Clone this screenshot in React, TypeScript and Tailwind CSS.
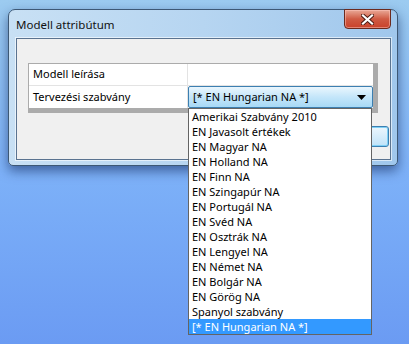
import React from "react";

const items = [
  "Amerikai Szabvány 2010",
  "EN Javasolt értékek",
  "EN Magyar NA",
  "EN Holland NA",
  "EN Finn NA",
  "EN Szingapúr NA",
  "EN Portugál NA",
  "EN Svéd NA",
  "EN Osztrák NA",
  "EN Lengyel NA",
  "EN Német NA",
  "EN Bolgár NA",
  "EN Görög NA",
  "Spanyol szabvány",
  "[* EN Hungarian NA *]",
];

export default function App() {
  return (
    <div
      className="w-[409px] h-[344px] overflow-hidden bg-gradient-to-b from-[#9ccbf0] via-[#7db1f8] to-[#6b9bf3] text-[11px] text-black"
      style={{ fontFamily: '"Noto Sans", "Open Sans", sans-serif' }}
    >
      <div className="pt-[9px] pl-[8px]">
        {/* window */}
        <div className="relative w-[390px] h-[157px] rounded-t-[7px] rounded-b-[5px] border border-[#3d5875] bg-gradient-to-r from-[#c8e0f4] via-[#b6d5f1] to-[#a0c7ec] shadow-[0_5px_12px_rgba(10,30,80,0.55)] flex flex-col">
          {/* title bar */}
          <div className="h-[28px] flex items-start">
            <div className="pl-[7px] pt-[7px] leading-[16px] text-[11.5px] text-[#111]">Modell attribútum</div>
            <div className="ml-auto mr-[6px] w-[47px] h-[20px] -mt-[1px] rounded-b-[4px] border border-[#6b2a1e] bg-gradient-to-b from-[#e8a897] via-[#cf5a43] to-[#c9412a] flex items-center justify-center shadow-[inset_0_0_0_1px_rgba(255,200,190,0.5)]">
              <svg width="13" height="11" viewBox="0 0 13 11">
                <path d="M2 1.5 L11 9.5 M11 1.5 L2 9.5" stroke="#4a1a12" strokeWidth="4" strokeLinecap="square" />
                <path d="M2 1.5 L11 9.5 M11 1.5 L2 9.5" stroke="#ffffff" strokeWidth="2.2" strokeLinecap="square" />
              </svg>
            </div>
          </div>
          {/* client area */}
          <div className="ml-[7px] w-[375px] h-[122px] border border-[#5a7390] bg-[#f0f0f0] shadow-[0_0_0_1px_rgba(255,255,255,0.6)]">
            <div className="pt-[24px] pl-[11px]">
              <div className="w-[350px] h-[50px] bg-[#ababab] pt-[1px] pl-[1px] pr-[5px] pb-[5px]">
                <div className="bg-white flex flex-col">
                  <div className="flex h-[22px] border-b border-[#e3e3e3]">
                    <div className="w-[159px] border-r border-[#e3e3e3] pl-[4px] flex items-center">Modell leírása</div>
                    <div className="flex-1" />
                  </div>
                  <div className="flex h-[22px]">
                    <div className="w-[159px] border-r border-[#e3e3e3] pl-[4px] flex items-center">Tervezési szabvány</div>
                    <div className="flex-1 relative">
                      <div className="h-[22px] rounded-[2px] border border-[#3c7fb1] bg-gradient-to-b from-[#eaf6fd] via-[#c4e6fa] to-[#a7d9f5] flex items-center pl-[4px] pr-[6px]">
                        <span>[* EN Hungarian NA *]</span>
                        <svg className="ml-auto" width="9" height="5" viewBox="0 0 9 5">
                          <path d="M0 0 H9 L4.5 5 Z" fill="#000" />
                        </svg>
                      </div>
                      {/* dropdown list */}
                      <div className="absolute left-0 top-[22px] w-[184px] border border-[#646464] bg-white z-10 flex flex-col">
                        {items.map((it, i) => (
                          <div
                            key={it}
                            className={
                              i === items.length - 1
                                ? "h-[15px] leading-[15px] pl-[3px] bg-[#3399ff] text-white"
                                : "h-[15px] leading-[15px] pl-[3px]"
                            }
                          >
                            {it}
                          </div>
                        ))}
                      </div>
                    </div>
                  </div>
                </div>
              </div>
              <div className="flex justify-end w-[361px] mt-[13px]">
                <div className="w-[75px] h-[21px] rounded-[3px] border border-[#3c7fb1] bg-gradient-to-b from-[#ecf6fd] to-[#bfe3f9] shadow-[inset_0_0_0_1px_#7fd0f5]" />
              </div>
            </div>
          </div>
        </div>
      </div>
    </div>
  );
}
